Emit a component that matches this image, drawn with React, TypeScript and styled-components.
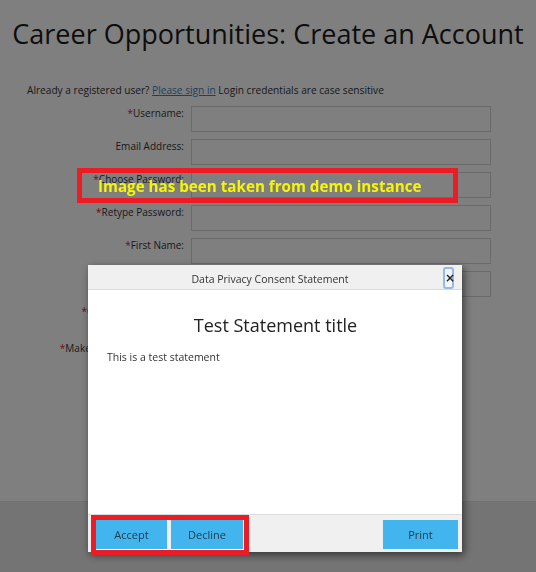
import React from 'react';
import styled, { createGlobalStyle } from 'styled-components';

interface FieldTypes {
  label: string;
  required?: boolean;
  kind?: 'text' | 'select' | 'radio';
}

const fields: FieldTypes[] = [
  { label: 'Username:', required: true },
  { label: 'Email Address:' },
  { label: 'Choose Password:', required: true },
  { label: 'Retype Password:', required: true },
  { label: 'First Name:', required: true },
  { label: 'Last Name:', required: true },
  { label: 'Country of residence', required: true, kind: 'select' },
  { label: 'Make this my main email:', required: true, kind: 'radio' },
];

const App = () => {
  return (
    <>
      <GlobalStyle />
      <Page>
        <Main>
          <PageTitle>Career Opportunities: Create an Account</PageTitle>
          <Intro>
            Already a registered user? <SignIn href="#">Please sign in</SignIn> Login
            credentials are case sensitive
          </Intro>
          <Form>
            {fields.map((field) => (
              <Row key={field.label}>
                <Label>
                  {field.required && <Star>*</Star>}
                  {field.label}
                </Label>
                {field.kind === 'select' ? (
                  <Select />
                ) : field.kind === 'radio' ? (
                  <RadioGroup>
                    <input type="radio" /> Yes <input type="radio" /> No
                  </RadioGroup>
                ) : (
                  <Input type="text" />
                )}
              </Row>
            ))}
          </Form>
        </Main>
        <PageFooter />
      </Page>

      <Overlay>
        <Dialog>
          <DialogHeader>
            <DialogTitle>Data Privacy Consent Statement</DialogTitle>
            <CloseBtn>×</CloseBtn>
          </DialogHeader>
          <DialogBody>
            <StatementTitle>Test Statement title</StatementTitle>
            <StatementText>This is a test statement</StatementText>
          </DialogBody>
          <DialogFooter>
            <BtnGroup>
              <Btn $w={71} $line>
                Accept
              </Btn>
              <Btn $w={72} $line>
                Decline
              </Btn>
            </BtnGroup>
            <Btn $w={75}>Print</Btn>
          </DialogFooter>
        </Dialog>
      </Overlay>

      <Note>Image has been taken from demo instance</Note>
    </>
  );
};

const GlobalStyle = createGlobalStyle`
  html, body {
    margin: 0;
    padding: 0;
  }
  body {
    font-family: 'Open Sans', 'Noto Sans', sans-serif;
    background: #ffffff;
    color: #333;
  }
`;

const Page = styled.div`
  display: flex;
  flex-direction: column;
  min-height: 100vh;
`;

const Main = styled.div`
  flex: 1;
`;

const PageTitle = styled.h1`
  margin: 0;
  padding-top: 15px;
  font-size: 27px;
  font-weight: 400;
  line-height: 37px;
  text-align: center;
  color: #1a1a1a;
`;

const Intro = styled.p`
  margin: 31px 0 0;
  padding-left: 27px;
  font-size: 10.15px;
  line-height: 14px;
  color: #333;
`;

const SignIn = styled.a`
  color: #3d7fbf;
  text-decoration: underline;
`;

const Form = styled.div`
  display: flex;
  flex-direction: column;
  gap: 7px;
  margin-top: 9px;
`;

const Row = styled.div`
  display: grid;
  grid-template-columns: 184px 300px;
  column-gap: 7px;
  align-items: start;
`;

const Label = styled.label`
  font-size: 10px;
  line-height: 14px;
  text-align: right;
  white-space: nowrap;
  color: #333;
`;

const Star = styled.span`
  color: #e02020;
`;

const Input = styled.input`
  box-sizing: border-box;
  width: 300px;
  height: 26px;
  border: 1px solid #d6d6d6;
  background: #fff;
  margin: 0;
`;

const Select = styled.select`
  box-sizing: border-box;
  width: 200px;
  height: 30px;
  border: 1px solid #d6d6d6;
  background: #fff;
`;

const RadioGroup = styled.div`
  font-size: 10px;
  height: 26px;
`;

const PageFooter = styled.footer`
  height: 70px;
  border-top: 1px solid #f2dcdc;
  background: #e8e8e8;
`;

const Overlay = styled.div`
  position: fixed;
  inset: 0;
  box-sizing: border-box;
  padding: 265px 0 0 88px;
  background: rgba(0, 0, 0, 0.5);
`;

const Dialog = styled.div`
  display: flex;
  flex-direction: column;
  width: 374px;
  height: 287px;
  background: #fff;
  box-shadow: 2px 3px 8px rgba(0, 0, 0, 0.55);
`;

const DialogHeader = styled.div`
  display: flex;
  align-items: flex-start;
  box-sizing: border-box;
  height: 25px;
  padding: 6px 8px 0 0;
  background: #f0f0f0;
  border-bottom: 1px solid #dcdcdc;
`;

const DialogTitle = styled.div`
  flex: 1;
  padding-left: 9px;
  font-size: 10.5px;
  line-height: 16px;
  text-align: center;
  color: #333;
`;

const CloseBtn = styled.button`
  align-self: center;
  box-sizing: border-box;
  width: 11px;
  height: 22px;
  margin-top: -5px;
  padding: 0;
  border: 2px solid #93b9ee;
  border-radius: 3px;
  background: #f4f4f4;
  font-family: 'DejaVu Sans', sans-serif;
  font-size: 12px;
  font-weight: 700;
  line-height: 18px;
  color: #222;
`;

const DialogBody = styled.div`
  flex: 1;
  padding: 0 18px 0 19px;
`;

const StatementTitle = styled.h2`
  margin: 23px 0 0;
  font-size: 18px;
  font-weight: 400;
  line-height: 24px;
  text-align: center;
  color: #222;
`;

const StatementText = styled.p`
  margin: 13px 0 0;
  font-size: 10.5px;
  line-height: 14px;
  color: #333;
`;

const DialogFooter = styled.div`
  display: flex;
  justify-content: space-between;
  align-items: flex-start;
  box-sizing: border-box;
  height: 38px;
  padding: 5px 4px 0 8px;
  background: #f0f0f0;
  border-top: 1px solid #dcdcdc;
`;

const BtnGroup = styled.div`
  display: flex;
  gap: 4px;
  padding-right: 1px;
  outline: 5px solid #ed1c24;
`;

const Btn = styled.button<{ $w: number; $line?: boolean }>`
  box-sizing: content-box;
  width: ${(props) => props.$w}px;
  height: 29px;
  padding: 0;
  border: none;
  border-bottom: ${(props) => (props.$line ? '1px solid #fafafa' : 'none')};
  background-color: #42b5ef;
  font-family: 'Open Sans', sans-serif;
  font-size: 11px;
  color: #233a48;
`;

const Note = styled.div`
  position: fixed;
  left: 77px;
  top: 168px;
  box-sizing: border-box;
  width: 381px;
  height: 35px;
  padding-left: 16px;
  display: flex;
  align-items: center;
  border: 5px solid #ed1c24;
  font-size: 15.2px;
  font-weight: 700;
  color: #f5f50a;
`;

export default App;
